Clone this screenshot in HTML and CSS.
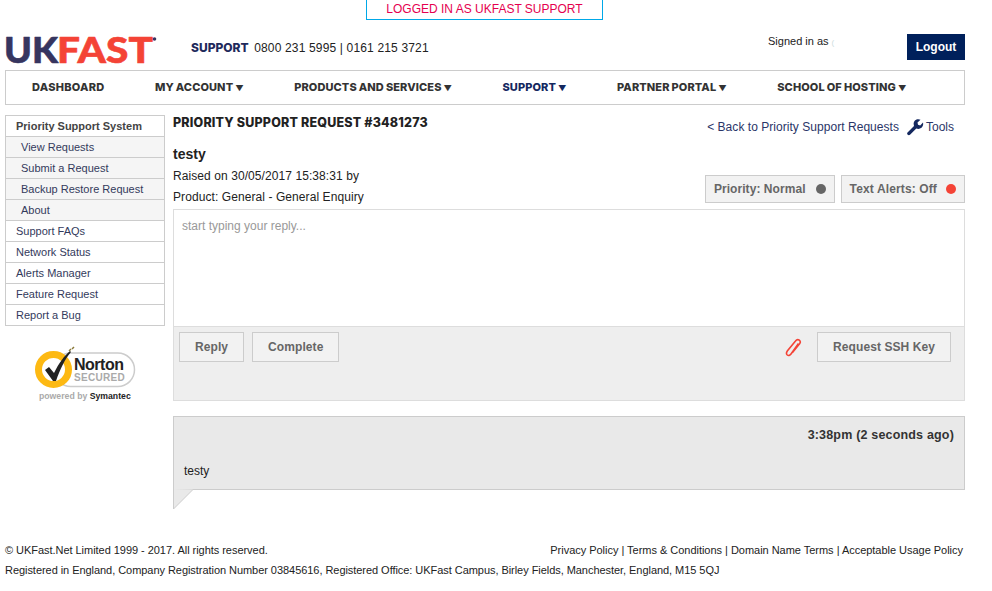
FILE: index.html
```html
<!DOCTYPE html>
<html lang="en">
<head>
  <meta charset="UTF-8" />
  <title>Priority Support Request</title>
  <link rel="stylesheet" href="styles.css">
</head>
<body>

<div class="impersonate">LOGGED IN AS UKFAST SUPPORT</div>

<div class="page">
  <header class="header">
    <a class="logo">
      <svg width="152" height="34" viewBox="0 0 152 34">
        <text x="-1" y="27" textLength="54" lengthAdjust="spacingAndGlyphs" class="logo-uk">UK</text>
        <text x="52" y="27" textLength="96" lengthAdjust="spacingAndGlyphs" class="logo-fast">FAST</text>
        <circle cx="149.500" cy="3" r="1.800" fill="#36355f"/>
      </svg>
    </a>
    <div class="phones"><b>SUPPORT</b> 0800 231 5995 | 0161 215 3721</div>
    <div class="signed">Signed in as <span class="signed-name">(</span></div>
    <a class="logout">Logout</a>
  </header>

  <nav class="nav">
    <a class="first">DASHBOARD</a>
    <a>MY ACCOUNT <span class="arrow">▼</span></a>
    <a>PRODUCTS AND SERVICES <span class="arrow">▼</span></a>
    <a class="current">SUPPORT <span class="arrow">▼</span></a>
    <a>PARTNER PORTAL <span class="arrow">▼</span></a>
    <a>SCHOOL OF HOSTING <span class="arrow">▼</span></a>
  </nav>

  <div class="columns">
    <aside class="side">
      <ul class="side-menu">
        <li class="head">Priority Support System</li>
        <li class="sub">View Requests</li>
        <li class="sub">Submit a Request</li>
        <li class="sub">Backup Restore Request</li>
        <li class="sub">About</li>
        <li>Support FAQs</li>
        <li>Network Status</li>
        <li>Alerts Manager</li>
        <li>Feature Request</li>
        <li>Report a Bug</li>
      </ul>
      <svg class="norton" width="102" height="58" viewBox="0 0 102 58">
        <rect x="20" y="7" width="80.500" height="33.500" rx="16.700" fill="#fff" stroke="#ccc" stroke-width="1.500"/>
        <circle cx="19.500" cy="23.500" r="15" fill="#fff" stroke="#fdb913" stroke-width="7"/>
        <path d="M11 24l4-3 5 6C25 17 30 10 36 5l1 1C31 13 26 23 22 35h-3z" fill="#222"/>
        <path d="M35 5l2-2M38 3l2-2" stroke="#8a7a3a" stroke-width="1.500"/>
        <text x="40" y="24" class="norton-name">Norton</text>
        <text x="40" y="35" class="norton-sec">SECURED</text>
        <text x="5" y="53" class="norton-by">powered by <tspan class="norton-sym">Symantec</tspan></text>
      </svg>
    </aside>

    <main class="main">
      <div class="title-row">
        <h1>PRIORITY SUPPORT REQUEST #3481273</h1>
        <div class="title-links">
          <a class="back">&lt; Back to Priority Support Requests</a>
          <a class="tools">
            <svg width="18" height="18" viewBox="0 0 18 18"><path d="M1.500 14.500L8 8C7 5 8 2.500 10.500 1.500 12 1 13.500 1.200 14.500 1.800L11.500 4.500 12 6.800 14.200 7.500 17 4.600C17.500 6.500 17 8.500 15.500 9.800 14 11 12 11.200 10.300 10.500L4 16.800C3.300 17.300 2.300 17.300 1.500 16.600 1 16 1 15.200 1.500 14.500z" fill="#14285f"/></svg>
            Tools
          </a>
        </div>
      </div>

      <div class="summary">
        <div>
          <h2>testy</h2>
          <p>Raised on 30/05/2017 15:38:31 by</p>
          <p>Product: General - General Enquiry</p>
        </div>
        <div class="flags">
          <span class="flag">Priority: Normal <i class="dot grey"></i></span>
          <span class="flag alerts">Text Alerts: Off <i class="dot red"></i></span>
        </div>
      </div>

      <div class="reply">
        <div class="reply-input">start typing your reply...</div>
        <div class="reply-bar">
          <button class="btn">Reply</button>
          <button class="btn">Complete</button>
          <svg class="clip" width="18" height="20" viewBox="0 0 18 20"><path d="M13.500 5.500L6 16C5 17.500 3.300 17.800 2.300 17 1.200 16 1.300 14.500 2.300 13L10.500 3C11.500 1.700 13 1.300 14.300 2.200 15.500 3.200 15.500 4.600 14.600 5.800L7.500 14.500" fill="none" stroke="#f44336" stroke-width="1.600"/></svg>
          <button class="btn">Request SSH Key</button>
        </div>
      </div>

      <div class="message">
        <div class="message-time">3:38pm (2 seconds ago)</div>
        <div class="message-text">testy</div>
        <svg class="message-tail" width="21" height="21" viewBox="0 0 21 21"><path d="M0.500 0V20L20 0.500" fill="#e9e9e9" stroke="#ccc"/></svg>
      </div>
    </main>
  </div>

  <footer class="footer">
    <div class="footer-top">
      <span class="copy">© UKFast.Net Limited 1999 - 2017. All rights reserved.</span>
      <span class="legal">Privacy Policy | Terms &amp; Conditions | Domain Name Terms | Acceptable Usage Policy</span>
    </div>
    <div class="registered">Registered in England, Company Registration Number 03845616, Registered Office: UKFast Campus, Birley Fields, Manchester, England, M15 5QJ</div>
  </footer>
</div>

</body>
</html>
```

FILE: styles.css
```css
html, body {
  margin: 0; padding: 0;
  background: #fff;
  color: #222;
  font-family: "Liberation Sans", Arial, sans-serif;
  font-size: 12px;
}

.impersonate {
  box-sizing: border-box;
  width: 237px;
  height: 20px;
  margin-left: 366px;
  border: 1px solid #00a8e8;
  border-top: none;
  color: #e5004f;
  font-size: 12px;
  line-height: 19px;
  text-align: center;
}

.page {
  width: 960px;
  margin-left: 5px;
}

.header {
  display: flex;
  height: 50px;
}

.logo {
  display: block;
  width: 186px;
  margin-top: 16px;
}
.logo svg { display: block; overflow: visible; }
.logo text {
  font-family: Lato, sans-serif;
  font-weight: 900;
  font-size: 36px;
  stroke-width: 0.600;
  stroke-linejoin: round;
}
.logo-uk { fill: #36355f; stroke: #36355f; }
.logo-fast { fill: #f44336; stroke: #f44336; }

.phones {
  width: 577px;
  margin-top: 20px;
  color: #222;
  line-height: 16px;
  letter-spacing: 0.160px;
}
.phones b {
  font-family: Inter, sans-serif;
  font-weight: 800;
  color: #1f2a5c;
  margin-right: 2px;
  letter-spacing: 0;
}

.signed {
  width: 139px;
  margin-top: 14px;
  font-size: 11px;
  line-height: 14px;
}
.signed-name { color: #cdd; font-size: 8px; }

.logout {
  width: 58px; height: 26px;
  margin-top: 14px;
  background: #00205b;
  color: #fff;
  font-weight: bold;
  line-height: 27px;
  text-align: center;
}

.nav {
  display: flex;
  gap: 50.500px;
  box-sizing: border-box;
  height: 35px;
  padding-left: 26px;
  border: 1px solid #ccc;
  font-family: Inter, sans-serif;
  font-size: 11px;
  font-weight: 800;
  line-height: 33px;
  letter-spacing: 0.100px;
  word-spacing: -0.500px;
  color: #333;
}
.nav .first { letter-spacing: 0.250px; }
.nav .current { color: #14285f; }
.arrow { font-size: 8px; letter-spacing: 0; }

.columns {
  display: flex;
  gap: 8px;
  margin-top: 10px;
}

.side { width: 160px; flex: none; }

.side-menu {
  list-style: none;
  margin: 0; padding: 0;
  border: 1px solid #ccc;
  border-bottom: none;
  font-size: 11px;
  color: #333a5c;
}
.side-menu li {
  box-sizing: border-box;
  height: 21px;
  padding-left: 10px;
  border-bottom: 1px solid #ccc;
  line-height: 20px;
}
.side-menu .head { color: #444; font-weight: bold; }
.side-menu .sub { padding-left: 15px; background: #f5f5f5; }

.norton { display: block; margin: 20px 0 0 29px; }
.norton-name { font: bold 16px "Liberation Sans", sans-serif; fill: #222; letter-spacing: -0.500px; }
.norton-sec { font: bold 10px "Liberation Sans", sans-serif; fill: #aaa; letter-spacing: 0.300px; }
.norton-by { font: bold 8.700px "Liberation Sans", sans-serif; fill: #aaa; }
.norton-sym { fill: #222; }

.main { flex: 1; min-width: 0; }

.title-row {
  display: flex;
  justify-content: space-between;
  height: 30px;
}
h1 {
  margin: 0;
  font-family: Inter, sans-serif;
  font-size: 12.500px;
  font-weight: 800;
  line-height: 15px;
  letter-spacing: 0.180px;
  color: #222;
}
.title-links {
  display: flex;
  gap: 7px;
  align-items: center;
  height: 24px;
  margin-right: 11px;
  color: #2a3568;
}
.back { letter-spacing: 0.040px; }
.tools { display: flex; align-items: center; gap: 2px; }

.summary {
  display: flex;
  justify-content: space-between;
  height: 64px;
}
h2 {
  margin: 0 0 3px;
  font-size: 14px;
  line-height: 18px;
  color: #222;
}
.summary p {
  margin: 0;
  line-height: 21px;
  letter-spacing: 0.080px;
}

.flags {
  display: flex;
  gap: 6px;
  align-items: flex-start;
  margin-top: 30px;
}
.flag {
  display: flex;
  align-items: center;
  gap: 10px;
  box-sizing: border-box;
  height: 28px;
  padding: 0 8px;
  border: 1px solid #ccc;
  background: #f2f2f2;
  color: #666;
  font-weight: bold;
  letter-spacing: 0.060px;
}
.flag.alerts { gap: 9px; letter-spacing: 0.130px; }
.dot {
  width: 10px; height: 10px;
  border-radius: 50%;
}
.dot.grey { background: #666; }
.dot.red { background: #f44336; }

.reply { border: 1px solid #ddd; }
.reply-input {
  box-sizing: border-box;
  height: 116px;
  padding: 9px 8px;
  color: #999;
}
.reply-bar {
  display: flex;
  align-items: flex-start;
  gap: 8px;
  height: 74px;
  padding: 5px 13px 0 5px;
  box-sizing: border-box;
  background: #eee;
  border-top: 1px solid #ddd;
}
.btn {
  height: 30px;
  padding: 0 15px;
  border: 1px solid #ccc;
  background: #f2f2f2;
  color: #666;
  font: bold 12px "Liberation Sans", sans-serif;
  letter-spacing: 0.080px;
}
.clip { margin: 6px 6px 0 auto; }

.message {
  position: relative;
  box-sizing: border-box;
  height: 74px;
  margin-top: 15px;
  padding: 10px 10px 0;
  background: #e9e9e9;
  border: 1px solid #ccc;
}
.message-time {
  font-size: 12.500px;
  font-weight: bold;
  line-height: 16px;
  letter-spacing: 0.180px;
  text-align: right;
  color: #333;
}
.message-text { margin-top: 20px; line-height: 16px; }
.message-tail {
  position: absolute;
  left: -1px; top: 72px;
}

.footer {
  margin-top: 53px;
  font-size: 11px;
  line-height: 14px;
}
.footer-top {
  display: flex;
  justify-content: space-between;
  margin-bottom: 6px;
}
.copy { letter-spacing: -0.040px; }
.legal { letter-spacing: -0.025px; margin-right: 2px; }
.registered { letter-spacing: -0.050px; }
```
